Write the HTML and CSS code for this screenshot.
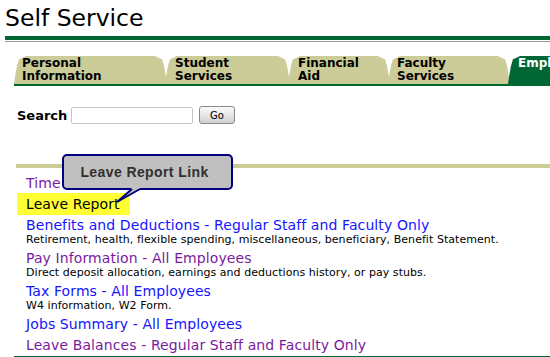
FILE: index.html
```html
<!DOCTYPE html>
<html>
<head>
<meta charset="utf-8">
<title>Self Service</title>
<link rel="stylesheet" href="styles.css">
</head>
<body>
<div class="page">
  <h1 class="title">Self Service</h1>
  <div class="rule-green"></div>
  <div class="rule-gray"></div>

  <div class="tabs">
    <div class="tab t1">Personal<br>Information</div>
    <div class="tab t2">Student<br>Services</div>
    <div class="tab t3">Financial<br>Aid</div>
    <div class="tab t4">Faculty<br>Services</div>
    <div class="tab t5 active">Employee</div>
  </div>

  <form class="search">
    <label class="search-label">Search</label>
    <input class="search-input" type="text">
    <button class="search-btn" type="button">Go</button>
  </form>

  <div class="content">
    <div class="khaki-bar"></div>
    <div class="menu">
      <a class="link visited first" href="#">Time Sheet</a>
      <div class="highlight-row"><a class="link plain hl" href="#">Leave Report</a></div>
      <a class="link blue" href="#">Benefits and Deductions - Regular Staff and Faculty Only</a>
      <div class="desc">Retirement, health, flexible spending, miscellaneous, beneficiary, Benefit Statement.</div>
      <a class="link visited gap" href="#">Pay Information - All Employees</a>
      <div class="desc">Direct deposit allocation, earnings and deductions history, or pay stubs.</div>
      <a class="link blue gap" href="#">Tax Forms - All Employees</a>
      <div class="desc">W4 information, W2 Form.</div>
      <a class="link blue gap" href="#">Jobs Summary - All Employees</a>
      <a class="link visited" href="#">Leave Balances - Regular Staff and Faculty Only</a>
    </div>
  </div>

  <div class="callout">Leave Report Link</div>
  <svg class="callout-tail" width="40" height="22" viewBox="0 0 40 22">
    <path d="M21,1 H30 V5 L7,18 L21,5 Z" fill="#c0c0c0"/>
    <path d="M22,5 L7,18 L30,5" fill="none" stroke="#000080" stroke-width="2"/>
  </svg>
</div>
</body>
</html>
```
FILE: styles.css
```css
* { box-sizing: border-box; }
html, body { margin: 0; padding: 0; background: #fff; }
body {
  width: 550px;
  height: 357px;
  overflow: hidden;
  font-family: "DejaVu Sans", Verdana, sans-serif;
}
.page { position: relative; }

.title {
  margin: 4px 0 0 5px;
  font-size: 23.5px;
  line-height: 28px;
  font-weight: normal;
  color: #000;
}
.rule-green {
  margin: 4px 0 0 5px;
  height: 4px;
  background: #006633;
}
.rule-gray {
  margin: 1px 0 0 5px;
  height: 1px;
  background: #999;
}

.tabs {
  display: flex;
  margin: 14px 0 0 14px;
  height: 30px;
  border-bottom: 2px solid #006633;
  overflow: hidden;
}
.tab {
  flex: none;
  height: 28px;
  padding: 1px 0 0 9px;
  background: #cccc99;
  font-size: 12px;
  line-height: 13px;
  font-weight: bold;
  color: #000;
  clip-path: polygon(0 100%, 1px 75%, 3px 35%, 5px 12%, 8px 2px, 12px 0,
    calc(100% - 12px) 0, calc(100% - 8px) 2px, calc(100% - 5px) 12%,
    calc(100% - 3px) 35%, calc(100% - 1px) 75%, 100% 100%);
}
.tab + .tab { margin-left: -2px; }
.t1 { width: 153px; padding-left: 8px; }
.t2 { width: 125px; padding-left: 10px; }
.t3 { width: 102px; padding-left: 10px; }
.t4 { width: 122px; padding-left: 9px; }
.t5 { width: 120px; padding-left: 10px; }
.tab.active { background: #006633; color: #fff; }

.search {
  display: flex;
  align-items: center;
  margin: 20px 0 0 17px;
  height: 18px;
}
.search-label {
  font-size: 13px;
  font-weight: bold;
  color: #000;
  width: 54px;
}
.search-input {
  width: 122px;
  height: 17px;
  margin: 0;
  border: 1px solid #c4c8cc;
  border-radius: 2px;
  background: #fff;
  padding: 0;
}
.search-btn {
  width: 36px;
  height: 18px;
  margin: 0 0 0 6px;
  padding: 0;
  border: 1px solid #8a8a8a;
  border-radius: 3px;
  background: linear-gradient(#fafafa, #e2e2e2 60%, #d0d0d0);
  font-family: "DejaVu Sans", Verdana, sans-serif;
  font-size: 10px;
  color: #000;
}

.content {
  margin: 40px 0 0 14px;
  border-bottom: 2px solid #006633;
}
.khaki-bar {
  margin-left: 2px;
  height: 4px;
  background: #cccc99;
}
.menu {
  display: flex;
  flex-direction: column;
  align-items: flex-start;
  padding-left: 12px;
}
.link {
  display: block;
  font-size: 14px;
  letter-spacing: 0.1px;
  line-height: 21px;
  text-decoration: none;
  white-space: nowrap;
}
.link.first { margin-top: 5px; line-height: 20px; }
.link.blue { color: #1414ff; }
.link.visited { color: #7a1a9e; }
.link.plain { color: #000; }
.highlight-row {
  margin-left: -9px;
  background: #ffff33;
  padding: 0 10px 0 9px;
  height: 22px;
}
.link.hl { line-height: 22px; }
.desc {
  margin-top: -3px;
  font-size: 11px;
  letter-spacing: 0.05px;
  line-height: 13px;
  color: #000;
  white-space: nowrap;
}
.link.gap { margin-top: 2px; }

.callout {
  position: absolute;
  left: 62px;
  top: 150px;
  width: 171px;
  height: 36px;
  border: 2px solid #000080;
  border-radius: 5px;
  background: #c0c0c0;
  font-family: "Liberation Sans", Arial, sans-serif;
  font-weight: bold;
  font-size: 14px;
  letter-spacing: 0.4px;
  color: #303030;
  line-height: 32px;
  text-align: center;
  padding-right: 6px;
}
.callout-tail {
  position: absolute;
  left: 110px;
  top: 180px;
}
```
